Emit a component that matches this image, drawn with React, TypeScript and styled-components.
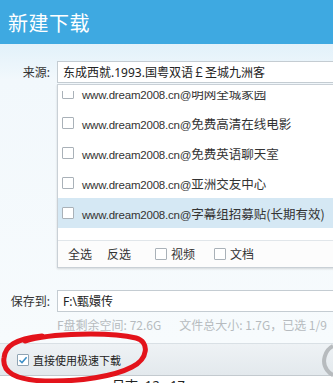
import React from 'react'
import styled, { createGlobalStyle } from 'styled-components'

const FONT = `"Noto Sans", "Noto Sans CJK SC", sans-serif`
const CJK = `"Noto Sans CJK SC", "Noto Sans", sans-serif`
const LATIN = `"Liberation Sans", "Noto Sans CJK SC", sans-serif`

const GlobalStyle = createGlobalStyle`
  html, body {
    margin: 0;
    padding: 0;
    background: #ffffff;
    overflow: hidden;
  }
`

const Dialog = styled.div`
  position: relative;
  width: 333px;
  height: 383px;
  overflow: hidden;
  font-family: ${FONT};
  background: #ffffff;
`

const Header = styled.div`
  height: 44px;
  display: flex;
  align-items: center;
  padding-left: 8px;
  background: #3ea9e1;
`

const Title = styled.h1`
  margin: 0;
  font-size: 20px;
  font-weight: 400;
  letter-spacing: 0.5px;
  color: #ffffff;
`

const Body = styled.div`
  height: 299px;
  box-sizing: border-box;
  padding-top: 17px;
  background: linear-gradient(to bottom, #e2f1fa 0, #f2f8fc 36px, #f7fbfd 100%);
`

const FieldRow = styled.div<{ $top?: number }>`
  display: flex;
  align-items: center;
  margin-top: ${(p) => p.$top ?? 0}px;
`

const Label = styled.span`
  width: 57px;
  box-sizing: border-box;
  padding-right: 7px;
  text-align: right;
  font-size: 12px;
  color: #333;
  flex: none;
`

const TextInput = styled.div`
  width: 300px;
  height: 22px;
  box-sizing: border-box;
  flex: none;
  display: flex;
  align-items: center;
  padding: 0 5px;
  border: 1px solid #c4ccd2;
  background: #ffffff;
  font-size: 12px;
  color: #222;
  white-space: nowrap;
`

const List = styled.div`
  margin: 1px 0 0 57px;
  width: 300px;
  height: 184px;
  box-sizing: border-box;
  border: 1px solid #c9d0d6;
  background: #ffffff;
  box-shadow: 0 1px 2px rgba(0, 0, 0, 0.14);
  display: flex;
  flex-direction: column;
`

const Items = styled.div`
  height: 155px;
  padding-top: 6px;
  box-sizing: border-box;
  flex: none;
`

const Clip = styled.div`
  height: 149px;
  overflow: hidden;
`

const ItemsInner = styled.div`
  margin-top: -13px;
`

const Row = styled.div<{ $active?: boolean }>`
  height: 30px;
  display: flex;
  align-items: center;
  gap: 8px;
  padding-left: 4px;
  background: ${(p) => (p.$active ? '#d5e8f4' : 'transparent')};
  font-family: ${CJK};
  font-size: 12.5px;
  color: #333;
  white-space: nowrap;
`

const Url = styled.span`
  font-family: ${LATIN};
  font-size: 11.5px;
  letter-spacing: -0.2px;
`

const Box = styled.span<{ $checked?: boolean }>`
  width: 12px;
  height: 12px;
  box-sizing: border-box;
  flex: none;
  display: inline-flex;
  align-items: center;
  justify-content: center;
  border: 1px solid ${(p) => (p.$checked ? '#8fa4b3' : '#a9b1b8')};
  border-radius: 1px;
  background: #ffffff;
`

const Toolbar = styled.div`
  flex: 1;
  display: flex;
  align-items: center;
  padding-left: 10px;
  border-top: 1px solid #e1e6ea;
  background: #fcfcfc;
  font-size: 12px;
  color: #333;
`

const ToolItem = styled.span<{ $gap: number }>`
  display: inline-flex;
  align-items: center;
  gap: 4px;
  margin-right: ${(p) => p.$gap}px;
`

const Info = styled.div`
  margin-top: 5px;
  padding-left: 57px;
  display: flex;
  gap: 18px;
  font-family: ${CJK};
  font-size: 12px;
  line-height: 16px;
  color: #b6bbbf;
  white-space: nowrap;
`

const Band = styled.div`
  height: 33px;
  box-sizing: border-box;
  display: flex;
  align-items: center;
  gap: 4px;
  padding-left: 17px;
  border-top: 1px solid #d9e0e5;
  border-bottom: 1px solid #c3cacf;
  background: linear-gradient(to bottom, #eef2f5, #e3e9ed);
  font-size: 11px;
  color: #222;
`

const Footer = styled.div`
  height: 7px;
  overflow: hidden;
  padding-left: 112px;
  font-size: 13px;
  line-height: 18px;
  color: #222;
  white-space: nowrap;
`

const Overlay = styled.svg`
  position: absolute;
  left: 0;
  top: 0;
  pointer-events: none;
`

const SITE = 'www.dream2008.cn@'

const items = ['明网全城家园', '免费高清在线电影', '免费英语聊天室', '亚洲交友中心', '字幕组招募贴(长期有效)']

const Check = () => (
  <svg width="10" height="10" viewBox="0 0 10 10">
    <path d="M1.5 5.2 L4 7.6 L8.6 2.2" fill="none" stroke="#3b8fc7" strokeWidth="1.5" />
  </svg>
)

export default function App() {
  return (
    <Dialog>
      <GlobalStyle />
      <Header>
        <Title>新建下载</Title>
      </Header>
      <Body>
        <FieldRow>
          <Label>来源:</Label>
          <TextInput>东成西就.1993.国粤双语￡圣城九洲客</TextInput>
        </FieldRow>
        <List>
          <Items>
            <Clip>
              <ItemsInner>
                {items.map((label, i) => (
                  <Row key={label} $active={i === items.length - 1}>
                    <Box />
                    <span>
                      <Url>{SITE}</Url>
                      {label}
                    </span>
                  </Row>
                ))}
              </ItemsInner>
            </Clip>
          </Items>
          <Toolbar>
            <ToolItem $gap={15}>全选</ToolItem>
            <ToolItem $gap={24}>反选</ToolItem>
            <ToolItem $gap={19}>
              <Box />
              视频
            </ToolItem>
            <ToolItem $gap={0}>
              <Box />
              文档
            </ToolItem>
          </Toolbar>
        </List>
        <FieldRow $top={22}>
          <Label>保存到:</Label>
          <TextInput>F:\甄嬛传</TextInput>
        </FieldRow>
        <Info>
          <span>F盘剩余空间: 72.6G</span>
          <span>文件总大小: 1.7G，已选 1/9</span>
        </Info>
      </Body>
      <Band>
        <Box $checked>
          <Check />
        </Box>
        <span>直接使用极速下载</span>
      </Band>
      <Footer>日志: 12 : 17</Footer>
      <Overlay width="333" height="383" viewBox="0 0 333 383">
        <path
          d="M333 346 C325 350 321 362 327 370 C330 374 333 375 333 375"
          fill="none"
          stroke="#b7bbbe"
          strokeWidth="4"
        />
        <path
          d="M25 341 C50 333 110 332 136 338 C150 342 148 359 132 367 C115 376 80 382 45 381 C15 380 2 372 4 358 C5 346 15 339 42 336"
          fill="none"
          stroke="#e3131b"
          strokeWidth="5"
          strokeLinecap="round"
        />
      </Overlay>
    </Dialog>
  )
}
